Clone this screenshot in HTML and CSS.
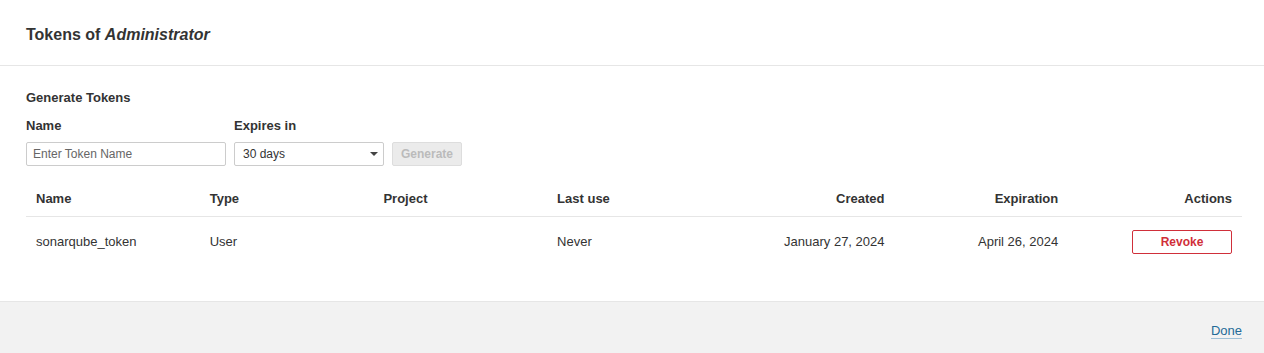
FILE: index.html
```html
<!DOCTYPE html>
<html>
  <head>
    <title>Tokens of Administrator</title>
    <link rel="stylesheet" href="styles.css">
  </head>
  <body>
    <div class="modal">
      <header class="modal-head">
        <h2>Tokens of <em>Administrator</em></h2>
      </header>

      <div class="modal-body">
        <h3>Generate Tokens</h3>
        <form class="token-form">
          <div class="field name-field">
            <label for="token-name">Name</label>
            <input type="text" id="token-name" placeholder="Enter Token Name">
          </div>
          <div class="field expires-field">
            <label for="token-expiry">Expires in</label>
            <div class="select-wrap">
              <select id="token-expiry">
                <option>30 days</option>
                <option>90 days</option>
                <option>1 year</option>
                <option>No expiration</option>
              </select>
            </div>
          </div>
          <button type="button" class="btn-generate" disabled>Generate</button>
        </form>

        <table class="tokens">
          <thead>
            <tr>
              <th>Name</th>
              <th>Type</th>
              <th>Project</th>
              <th>Last use</th>
              <th class="right">Created</th>
              <th class="right">Expiration</th>
              <th class="right">Actions</th>
            </tr>
          </thead>
          <tbody>
            <tr>
              <td>sonarqube_token</td>
              <td>User</td>
              <td></td>
              <td>Never</td>
              <td class="right">January 27, 2024</td>
              <td class="right">April 26, 2024</td>
              <td class="right"><button type="button" class="btn-revoke">Revoke</button></td>
            </tr>
          </tbody>
        </table>
      </div>

      <footer class="modal-foot">
        <a href="#" class="done">Done</a>
      </footer>
    </div>
  </body>
</html>
```

FILE: styles.css
```css
/* reset */
* {
  box-sizing: border-box;
  margin: 0;
  padding: 0;
}

body {
  font-family: "Liberation Sans", Arial, Helvetica, sans-serif;
  font-size: 13px;
  color: #333;
  background-color: #fff;
}

/* modal header */
.modal-head {
  height: 66px;
  padding: 23px 22px 0 26px;
  border-bottom: 1px solid #e6e6e6;
}

.modal-head h2 {
  font-size: 16px;
  line-height: 24px;
  font-weight: bold;
  color: #333;
}

.modal-head em {
  font-style: italic;
}

/* modal body */
.modal-body {
  padding: 24px 22px 34px 26px;
}

.modal-body h3 {
  font-size: 13px;
  line-height: 16px;
  font-weight: bold;
  margin-bottom: 12px;
}

.token-form {
  display: flex;
  align-items: flex-end;
  gap: 8px;
}

.field label {
  display: block;
  font-size: 13px;
  line-height: 16px;
  font-weight: bold;
  margin-bottom: 8px;
}

.field input,
.field select {
  display: block;
  height: 24px;
  border: 1px solid #ccc;
  border-radius: 2px;
  background-color: #fff;
  font-family: inherit;
  font-size: 12px;
  color: #333;
  outline: none;
}

.name-field input {
  width: 200px;
  padding: 0 6px;
}

.name-field input::placeholder {
  color: #666;
}

.select-wrap {
  position: relative;
  width: 150px;
}

.select-wrap select {
  width: 100%;
  padding: 0 20px 0 8px;
  appearance: none;
  -webkit-appearance: none;
}

.select-wrap::after {
  content: "";
  position: absolute;
  right: 6px;
  top: 10px;
  border-left: 4px solid transparent;
  border-right: 4px solid transparent;
  border-top: 4px solid #444;
  pointer-events: none;
}

.btn-generate {
  width: 70px;
  height: 24px;
  border: 1px solid #ddd;
  border-radius: 2px;
  background-color: #ebebeb;
  color: #bbb;
  font-family: inherit;
  font-size: 12px;
  font-weight: 600;
  cursor: not-allowed;
}

/* tokens table */
.tokens {
  width: 100%;
  margin-top: 16px;
  border-collapse: collapse;
  table-layout: fixed;
}

.tokens th {
  padding: 9px 10px;
  line-height: 16px;
  font-size: 13px;
  font-weight: bold;
  text-align: left;
  border-bottom: 1px solid #e6e6e6;
}

.tokens td {
  padding: 13px 10px;
  line-height: 16px;
  vertical-align: middle;
  text-align: left;
}

.tokens .right {
  text-align: right;
}

.btn-revoke {
  width: 100px;
  height: 24px;
  border: 1px solid #d02f3a;
  border-radius: 2px;
  background-color: #fff;
  color: #d02f3a;
  font-family: inherit;
  font-size: 12px;
  font-weight: 600;
  cursor: pointer;
}

/* modal footer */
.modal-foot {
  height: 52px;
  padding: 21px 22px 0;
  border-top: 1px solid #e6e6e6;
  background-color: #f2f2f2;
  text-align: right;
}

.done {
  font-size: 13px;
  line-height: 16px;
  color: #236a97;
  text-decoration: none;
  border-bottom: 1px solid #9fc0d6;
}
```
